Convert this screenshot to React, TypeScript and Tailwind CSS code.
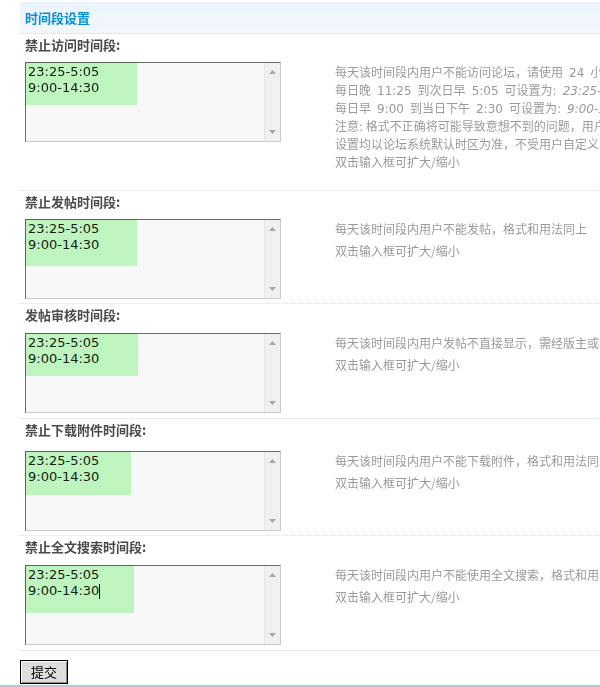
type Row = {
    label: string;
    labelClass: string;
    contentClass: string;
    mark: string;
    caret?: boolean;
    desc: React.ReactNode;
};

// 数字用 Verdana 风格字体，前后空格按半角宽度
const Num = ({ children }: { children: React.ReactNode }) => (
    <span className="font-['DejaVu_Sans',sans-serif]">{children}</span>
);

const Sp = () => <span className="inline-block w-[6px]" />;

const ShortDesc = ({ text }: { text: string }) => (
    <div className="-mt-[1px] leading-[22px]">
        <div className="h-[22px]">{text}</div>
        <div className="h-[22px]">双击输入框可扩大/缩小</div>
    </div>
);

const rows: Row[] = [
    {
        label: "禁止访问时间段:",
        labelClass: "h-[28px]",
        contentClass: "h-[128px]",
        mark: "w-[112px] h-[43px]",
        desc: (
            <div className="pt-[1px] leading-[18px]">
                <div className="h-[18px]">
                    每天该时间段内用户不能访问论坛，请使用<Sp /><Num>24</Num><Sp />小时时段格式，一个时间段一行，如不需要限制请留空。
                </div>
                <div className="h-[18px]">
                    每日晚<Sp /><Num>11:25</Num><Sp />到次日早<Sp /><Num>5:05</Num><Sp />可设置为<Num>:</Num><Sp />
                    <em className="font-['DejaVu_Sans',sans-serif]">23:25-5:05</em>
                </div>
                <div className="h-[18px]">
                    每日早<Sp /><Num>9:00</Num><Sp />到当日下午<Sp /><Num>2:30</Num><Sp />可设置为<Num>:</Num><Sp />
                    <em className="font-['DejaVu_Sans',sans-serif]">9:00-14:30</em>
                </div>
                <div className="h-[18px]">
                    注意<Num>:</Num> 格式不正确将可能导致意想不到的问题，用户组中的“不受时间段限制”设置可以让某些用户组不受限制，所有时间段
                </div>
                <div className="h-[18px]">设置均以论坛系统默认时区为准，不受用户自定义时区的影响</div>
                <div className="h-[18px]">双击输入框可扩大/缩小</div>
            </div>
        ),
    },
    {
        label: "禁止发帖时间段:",
        labelClass: "h-[28px]",
        contentClass: "h-[84px]",
        mark: "w-[112px] h-[47px]",
        desc: <ShortDesc text="每天该时间段内用户不能发帖，格式和用法同上" />,
    },
    {
        label: "发帖审核时间段:",
        labelClass: "h-[29px]",
        contentClass: "h-[85px]",
        mark: "w-[113px] h-[43px]",
        desc: <ShortDesc text="每天该时间段内用户发帖不直接显示，需经版主或管理员审核才能发表，格式和用法同上" />,
    },
    {
        label: "禁止下载附件时间段:",
        labelClass: "h-[32px]",
        contentClass: "h-[84px]",
        mark: "w-[106px] h-[44px]",
        desc: <ShortDesc text="每天该时间段内用户不能下载附件，格式和用法同上" />,
    },
    {
        label: "禁止全文搜索时间段:",
        labelClass: "h-[29px]",
        contentClass: "h-[85px]",
        mark: "w-[109px] h-[48px]",
        caret: true,
        desc: <ShortDesc text="每天该时间段内用户不能使用全文搜索，格式和用法同上" />,
    },
];

const Arrow = ({ down }: { down?: boolean }) => (
    <svg width="7" height="4" viewBox="0 0 7 4">
        <path d={down ? "M0 0H7L3.5 4Z" : "M3.5 0L7 4H0Z"} fill="#a6a6a6" />
    </svg>
);

const TimeBox = ({ mark, caret }: { mark: string; caret?: boolean }) => (
    <div className="relative w-[256px] h-[80px] shrink-0">
        <div className="flex w-full h-full border border-t-[#6a6a6a] border-l-[#6a6a6a] border-r-[#cacaca] border-b-[#cacaca] bg-[#f8f8f8]">
            <div className="flex-1 pl-[2px] pt-[1px] font-['DejaVu_Sans',sans-serif] text-[13px] leading-[16px] text-[#1c1c1c]">
                <div>23:25-5:05</div>
                <div className="flex items-center">
                    9:00-14:30
                    {caret && <span className="inline-block w-px h-[15px] bg-black" />}
                </div>
            </div>
            <div className="w-[16px] flex flex-col items-center justify-between py-[7px] bg-[#f0f0f0] border-l border-[#e6e6e6]">
                <Arrow />
                <Arrow down />
            </div>
        </div>
        {/* 选中高亮 */}
        <div className={`absolute left-0 top-0 bg-[#c4fcc4] mix-blend-multiply ${mark}`} />
    </div>
);

export default function App() {
    return (
        <div className="w-[600px] h-[687px] overflow-hidden bg-white flex flex-col font-['Noto_Sans_CJK_SC',sans-serif]">
            <div className="pl-5 pt-[2px]">
                {/* 标题 */}
                <div className="h-[32px] pl-[5px] flex items-center bg-gradient-to-b from-[#eaf3fc] to-[#f3f8fe] border-b border-dotted border-[#cfe0ee]">
                    <span className="text-[13px] font-bold text-[#0a8fd0] leading-none">时间段设置</span>
                </div>

                {rows.map((row, i) => (
                    <div key={row.label} className={i > 0 ? "border-t border-dotted border-[#cfe0ee]" : ""}>
                        <div className={`pl-[5px] pt-[3px] text-[13px] font-bold text-[#4a4a4a] leading-[16px] ${row.labelClass}`}>
                            {row.label}
                        </div>
                        <div className={`flex pl-[5px] ${row.contentClass}`}>
                            <TimeBox mark={row.mark} caret={row.caret} />
                            <div className="ml-[54px] whitespace-nowrap text-[12px] text-[#9a9a9a]">{row.desc}</div>
                        </div>
                    </div>
                ))}

                <div className="border-t border-dotted border-[#cfe0ee] pt-[7px]">
                    <button className="w-[48px] h-[24px] border border-black bg-[#dedede] shadow-[inset_1px_1px_0_#ffffff,inset_-1px_-1px_0_#8a8a8a] text-[13px] text-black leading-none">
                        提交
                    </button>
                </div>
            </div>
            <div className="mt-auto h-[2px] bg-[#a9ccd6]" />
        </div>
    );
}
